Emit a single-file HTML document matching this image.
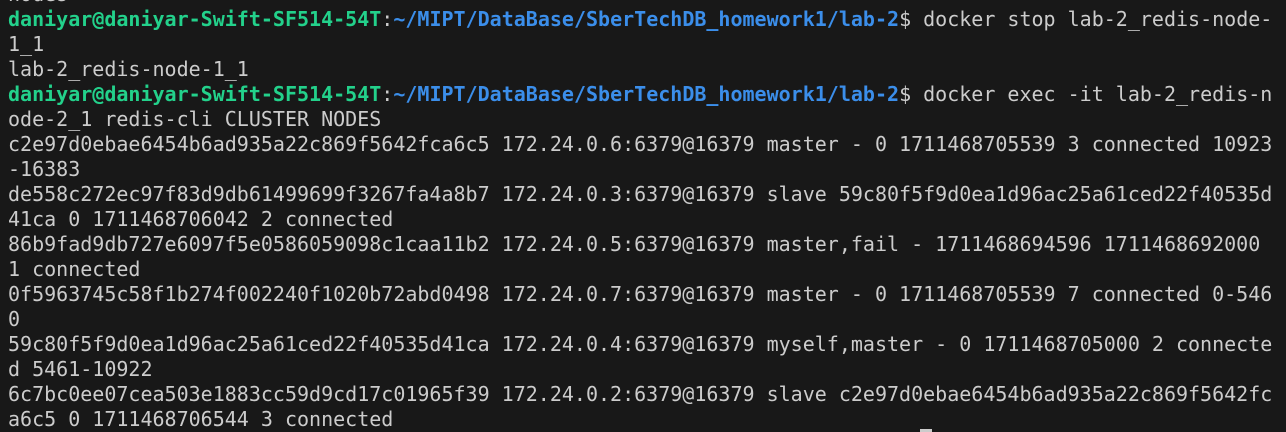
<!DOCTYPE html><html><head><style>
html,body{margin:0;padding:0;background:#181818;width:1286px;height:432px;overflow:hidden}
pre{position:absolute;left:8px;top:-18px;margin:0;font-family:"DejaVu Sans Mono","Liberation Mono",monospace;font-size:20px;line-height:25px;color:#cccccc;white-space:pre}
.g{color:#23d18b;font-weight:bold}.b{color:#3b8eea;font-weight:bold}
.cur{position:absolute;left:920px;top:429px;width:12px;height:3px;background:#ccc}
</style></head><body><pre>nodes
<span class="g">daniyar@daniyar-Swift-SF514-54T</span>:<span class="b">~/MIPT/DataBase/SberTechDB_homework1/lab-2</span>$ docker stop lab-2_redis-node-
1_1
lab-2_redis-node-1_1
<span class="g">daniyar@daniyar-Swift-SF514-54T</span>:<span class="b">~/MIPT/DataBase/SberTechDB_homework1/lab-2</span>$ docker exec -it lab-2_redis-n
ode-2_1 redis-cli CLUSTER NODES
c2e97d0ebae6454b6ad935a22c869f5642fca6c5 172.24.0.6:6379@16379 master - 0 1711468705539 3 connected 10923
-16383
de558c272ec97f83d9db61499699f3267fa4a8b7 172.24.0.3:6379@16379 slave 59c80f5f9d0ea1d96ac25a61ced22f40535d
41ca 0 1711468706042 2 connected
86b9fad9db727e6097f5e0586059098c1caa11b2 172.24.0.5:6379@16379 master,fail - 1711468694596 1711468692000
1 connected
0f5963745c58f1b274f002240f1020b72abd0498 172.24.0.7:6379@16379 master - 0 1711468705539 7 connected 0-546
0
59c80f5f9d0ea1d96ac25a61ced22f40535d41ca 172.24.0.4:6379@16379 myself,master - 0 1711468705000 2 connecte
d 5461-10922
6c7bc0ee07cea503e1883cc59d9cd17c01965f39 172.24.0.2:6379@16379 slave c2e97d0ebae6454b6ad935a22c869f5642fc
a6c5 0 1711468706544 3 connected
</pre><div class="cur"></div></body></html>
